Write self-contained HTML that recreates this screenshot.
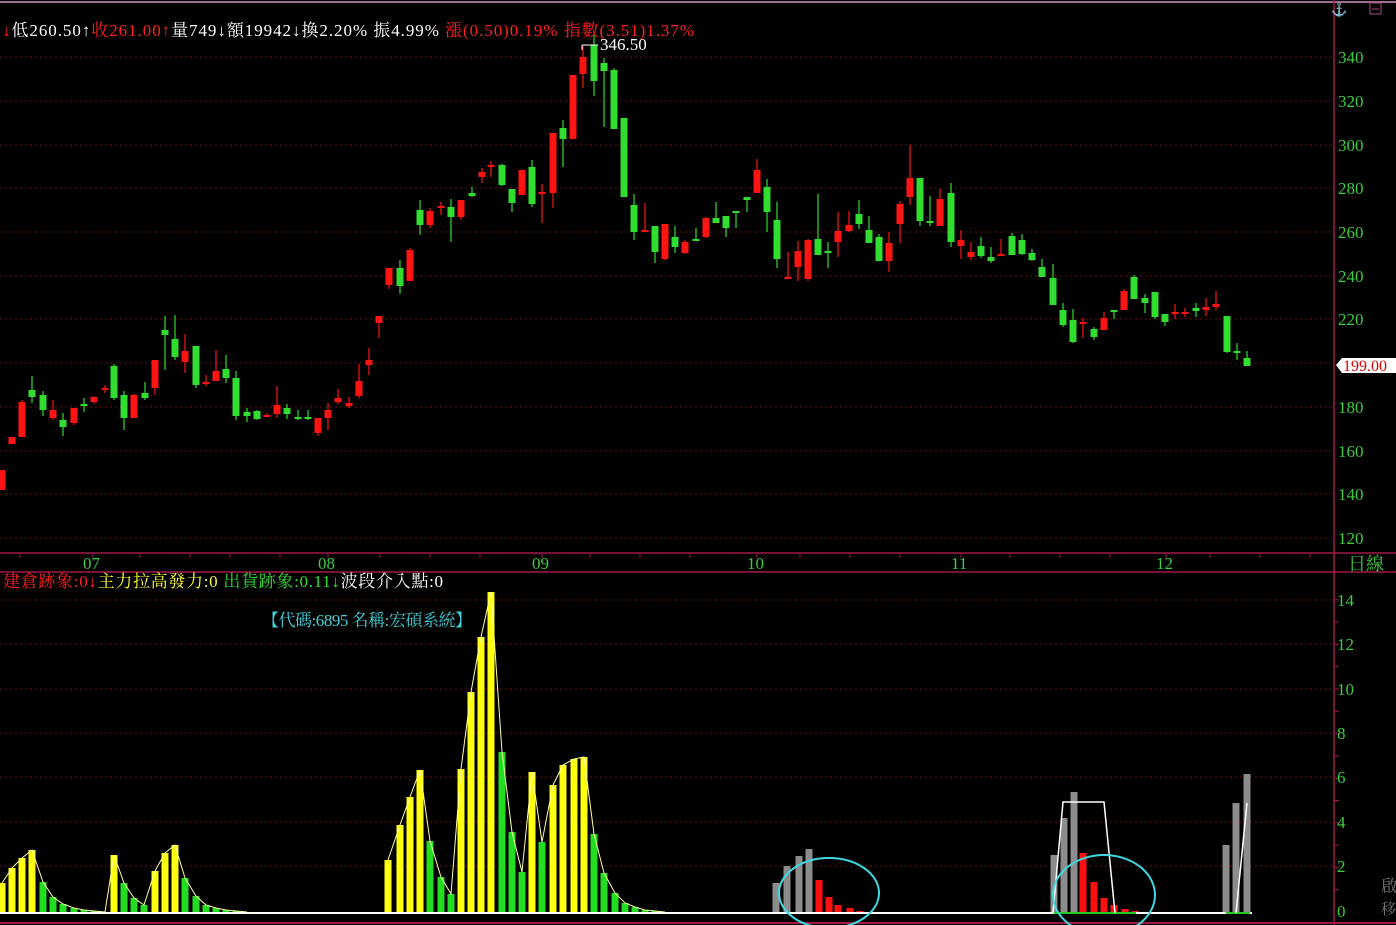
<!DOCTYPE html>
<html><head><meta charset="utf-8">
<style>
html,body{margin:0;padding:0;background:#000;width:1396px;height:925px;overflow:hidden}
svg{display:block}
text{font-family:"Liberation Serif","Noto Serif CJK TC","Noto Sans CJK TC",serif}
</style></head><body>
<svg id="s" width="1396" height="925" viewBox="0 0 1396 925" xmlns="http://www.w3.org/2000/svg">
<rect width="1396" height="925" fill="#000"/>
<g id="grid" stroke="#6a1010" stroke-width="1" stroke-dasharray="2,3"></g>
<line x1="0" y1="2" x2="1396" y2="2" stroke="#a07090" stroke-width="2"/>
<line x1="1334" y1="0" x2="1334" y2="925" stroke="#a01848" stroke-width="1.5"/>
<line x1="0" y1="553" x2="1396" y2="553" stroke="#a01848" stroke-width="1.5"/>
<line x1="0" y1="572" x2="1396" y2="572" stroke="#a01848" stroke-width="1.5"/>
<line x1="0" y1="923" x2="1396" y2="923" stroke="#a01848" stroke-width="2"/>
<g id="ticks" stroke="#a01848" stroke-width="1"></g>
<g id="candles"></g>
<g id="bars"></g>
<line x1="0" y1="913" x2="1252" y2="913" stroke="#fff" stroke-width="2"/>
<line x1="1054" y1="913" x2="1136" y2="913" stroke="#2c2" stroke-width="2"/>
<line x1="1226" y1="913" x2="1250" y2="913" stroke="#2c2" stroke-width="2"/>
<g id="lines" fill="none" stroke-width="1"></g>
<polyline points="1053,913 1063,802 1104,802 1115,913" fill="none" stroke="#fff" stroke-width="1.5"/>
<polyline points="1236,913 1247,803" fill="none" stroke="#fff" stroke-width="1.5"/>
<ellipse cx="829" cy="893" rx="50" ry="35" fill="none" stroke="#40d8e0" stroke-width="2"/>
<ellipse cx="1104" cy="895" rx="51" ry="40" fill="none" stroke="#40d8e0" stroke-width="2"/>

<g fill="#3ccc3c" font-size="17">
<text x="1338" y="63">340</text><text x="1338" y="107">320</text><text x="1338" y="151">300</text>
<text x="1338" y="194">280</text><text x="1338" y="238">260</text><text x="1338" y="282">240</text>
<text x="1338" y="325">220</text><text x="1338" y="413">180</text><text x="1338" y="457">160</text>
<text x="1338" y="500">140</text><text x="1338" y="544">120</text>
<text x="83" y="569">07</text><text x="318" y="569">08</text><text x="532" y="569">09</text>
<text x="747" y="569">10</text><text x="951" y="569">11</text><text x="1156" y="569">12</text>
<text x="1348" y="570" font-size="18">日線</text>
<text x="1337" y="606">14</text><text x="1337" y="650">12</text><text x="1337" y="695">10</text>
<text x="1337" y="739">8</text><text x="1337" y="783">6</text><text x="1337" y="828">4</text>
<text x="1337" y="872">2</text><text x="1337" y="917">0</text>
</g>
<polygon points="1336,365 1342,358 1396,358 1396,373 1342,373" fill="#fff"/>
<text x="1343" y="371" fill="#e00000" font-size="16">199.00</text>
<text x="1331" y="14" fill="#ddd" font-size="13">⚓</text>
<rect x="1370" y="3" width="11" height="11" fill="none" stroke="#a05080" stroke-width="1"/>
<line x1="1372" y1="9" x2="1379" y2="9" stroke="#a05080"/>
<text x="2" y="36" font-size="17" fill="#fff" textLength="692" lengthAdjust="spacing" xml:space="preserve"><tspan fill="#ff2020">↓</tspan>低260.50↑<tspan fill="#ff2020">收261.00↑</tspan>量749↓額19942↓換2.20% 振4.99% <tspan fill="#ff2020">漲(0.50)0.19% 指數(3.51)1.37%</tspan></text>
<line x1="582" y1="45" x2="598" y2="45" stroke="#fff" stroke-width="1"/>
<line x1="582" y1="45" x2="582" y2="50" stroke="#fff" stroke-width="1"/>
<text x="600" y="50" font-size="17" fill="#fff">346.50</text>
<text x="3" y="587" font-size="17" fill="#fff" textLength="440" lengthAdjust="spacing" xml:space="preserve"><tspan fill="#ff2020">建倉跡象:0↓</tspan><tspan fill="#ffff30">主力拉高發力:0</tspan> <tspan fill="#30e030">出貨跡象:0.11↓</tspan>波段介入點:0</text>
<text x="262" y="626" font-size="17" fill="#40d0d8" textLength="210" lengthAdjust="spacing">【代碼:6895 名稱:宏碩系統】</text>
<text x="1381" y="892" font-size="17" fill="#777">啟</text>
<text x="1381" y="914" font-size="15" fill="#777">移</text>
</svg>
<script>
var NS="http://www.w3.org/2000/svg";
function el(p,t,a){var e=document.createElementNS(NS,t);for(var k in a)e.setAttribute(k,a[k]);document.getElementById(p).appendChild(e);return e;}
[57,101,145,188,232,276,319,363,407,451,494,538,600,644,689,733,777,822,866].forEach(function(y){el("grid","line",{x1:0,y1:y,x2:1333,y2:y});});
[20,93,140,190,230,280,328,380,430,480,542,590,640,690,757,800,850,900,961,1010,1060,1110,1166,1210,1260,1310].forEach(function(x){el("ticks","line",{x1:x,y1:553,x2:x,y2:558});});
for(var v=1;v<15;v++){var y=912-v*22.3;el("ticks","line",{x1:1334,y1:y,x2:1339,y2:y});}
var C=[[2,470,490,470,490,'r'],[12,437,444,437,444,'r'],[22,402,437,400,437,'r'],[32,390,397,376,403,'g'],[43,395,410,391,416,'g'],[53,410,418,400,420,'r'],[63,420,427,413,436,'g'],[74,408,423,408,425,'r'],[84,404,406,398,412,'g'],[94,397,402,396,404,'r'],[105,388,390,385,393,'r'],[114,366,398,364,400,'g'],[124,395,418,391,430,'g'],[134,395,418,394,418,'r'],[145,393,398,382,400,'g'],[155,360,388,360,395,'r'],[165,330,335,316,370,'g'],[175,339,357,315,360,'g'],[185,351,362,334,373,'r'],[196,346,385,346,388,'g'],[206,382,384,375,386,'r'],[216,371,381,350,381,'r'],[226,369,378,355,383,'g'],[236,378,416,371,420,'g'],[247,412,416,408,422,'g'],[257,411,419,410,420,'g'],[267,415,416,413,417,'r'],[277,405,414,386,418,'r'],[287,408,414,404,419,'g'],[298,417,419,410,420,'g'],[308,417,419,410,420,'g'],[318,418,433,418,436,'r'],[328,410,418,403,430,'r'],[338,398,402,389,404,'r'],[349,403,406,397,408,'r'],[359,381,396,364,398,'r'],[369,360,365,348,375,'r'],[379,316,323,316,338,'r'],[389,268,285,268,289,'r'],[400,268,286,260,294,'g'],[410,250,281,248,281,'r'],[420,210,225,200,235,'g'],[430,211,225,208,228,'r'],[441,206,208,202,215,'r'],
[451,207,217,199,242,'g'],[461,200,217,200,220,'r'],[472,193,196,187,197,'g'],[482,172,177,168,183,'r'],[491,165,167,161,177,'r'],[502,165,185,164,186,'g'],[512,189,203,189,212,'g'],[522,170,195,170,195,'r'],[532,167,204,160,207,'g'],[542,192,194,184,223,'r'],[553,133,193,133,208,'r'],[563,128,139,120,167,'g'],[573,75,139,75,139,'r'],[583,57,74,46,88,'r'],[594,45,81,35,96,'g'],[604,63,71,58,127,'g'],[614,70,129,68,129,'g'],[624,118,197,118,197,'g'],[634,205,232,194,240,'g'],[645,230,232,203,232,'r'],[655,226,252,226,263,'g'],[665,224,259,224,260,'r'],[675,237,247,226,253,'g'],[685,242,253,240,254,'r'],[696,239,241,228,241,'g'],[706,218,237,217,238,'r'],[716,218,223,202,223,'g'],[726,216,228,216,237,'g'],[736,211,213,211,228,'g'],[747,197,200,197,212,'g'],[757,170,193,159,193,'r'],[767,187,212,179,232,'g'],[777,220,259,202,268,'g'],[788,277,279,252,279,'r'],[798,251,267,241,281,'r'],[808,240,279,239,281,'r'],[818,239,255,194,255,'g'],[828,251,253,242,268,'g'],[838,231,242,212,257,'r'],[849,225,231,211,232,'r'],[859,214,224,200,229,'g'],[869,230,243,216,243,'g'],[879,237,261,234,261,'g'],[889,243,261,232,272,'r'],[900,204,224,201,243,'r'],[910,178,197,145,205,'r'],[920,178,221,178,226,'g'],[930,221,223,196,226,'g'],[940,199,226,189,226,'r'],[951,193,242,183,247,'g'],[961,240,246,230,259,'r'],[971,252,257,242,260,'r'],[981,246,256,237,258,'g'],[991,257,261,247,263,'g'],[1001,254,256,239,256,'r'],[1012,236,255,233,255,'g'],[1022,240,254,234,255,'g'],[1032,253,260,249,261,'g'],[1042,267,277,259,277,'g'],[1053,278,305,264,305,'g'],[1063,310,325,303,327,'g'],[1073,320,342,309,343,'g'],[1083,322,324,318,338,'r'],[1094,329,337,327,340,'g'],[1104,318,330,312,330,'r'],[1114,310,312,310,319,'g'],[1124,291,310,289,310,'r'],[1134,277,299,275,299,'g'],[1145,298,303,294,313,'g'],[1155,292,317,292,319,'g'],[1165,314,322,314,326,'g'],[1175,312,314,304,319,'r'],[1185,312,314,308,317,'r'],[1196,308,311,303,317,'g'],[1206,307,310,298,316,'r'],[1216,304,307,291,310,'r'],[1227,316,352,316,353,'g'],[1237,351,353,343,360,'g'],[1247,358,366,351,366,'g']];
C.forEach(function(c){var col=c[5]=='r'?'#ff1414':'#30dd30';
el("candles","line",{x1:c[0],y1:c[3],x2:c[0],y2:c[4],stroke:col,"stroke-width":1.2});
var h=Math.max(2,c[2]-c[1]);el("candles","rect",{x:c[0]-3.5,y:c[1],width:7,height:h,fill:col});});
var Y='#ffff10',G='#22dd22',R='#ff1010',W='#8c8c8c';
var B=[[2,883,Y],[12,868,Y],[22,858,Y],[32,850,Y],[43,882,G],[53,897,G],[63,904,G],[74,908,G],[84,910,G],[94,911,G],[105,912,G],[114,855,Y],[124,883,G],[134,898,G],[144,905,G],[155,871,Y],[165,853,Y],[175,845,Y],[185,878,G],[196,896,G],[206,905,G],[216,908,G],[226,910,G],[236,911,G],[247,912,G],
[388,860,Y],[400,825,Y],[410,797,Y],[420,770,Y],[430,841,G],[441,877,G],[451,894,G],[461,769,Y],[471,692,Y],[481,637,Y],[491,592,Y],[502,752,G],[512,832,G],[522,872,G],[532,772,Y],[542,842,G],[553,785,Y],[563,765,Y],[574,759,Y],[584,757,Y],[594,834,G],[604,873,G],[615,893,G],[625,903,G],[635,907,G],[645,910,G],[655,911,G],[665,912,G],
[776,883,W],[787,866,W],[799,856,W],[809,849,W],[819,880,R],[829,897,R],[838,905,R],[850,908,R],[860,911,R],
[1054,855,W],[1064,818,W],[1074,792,W],[1083,853,R],[1094,882,R],[1104,898,R],[1114,905,R],[1125,909,R],[1135,911,R],[1226,845,W],[1236,803,W],[1247,774,W]];
B.forEach(function(b){el("bars","rect",{x:b[0]-3.5,y:b[1],width:7,height:913-b[1],fill:b[2]});});
function pl(pts,col){el("lines","polyline",{points:pts.map(function(p){return p.join(',')}).join(' '),stroke:col});}
[[0,25],[25,53]].forEach(function(s){var pts=[];for(var i=s[0];i<s[1];i++)pts.push([B[i][0],B[i][1]]);pl(pts,'#ffffa0');});
</script>
</body></html>
